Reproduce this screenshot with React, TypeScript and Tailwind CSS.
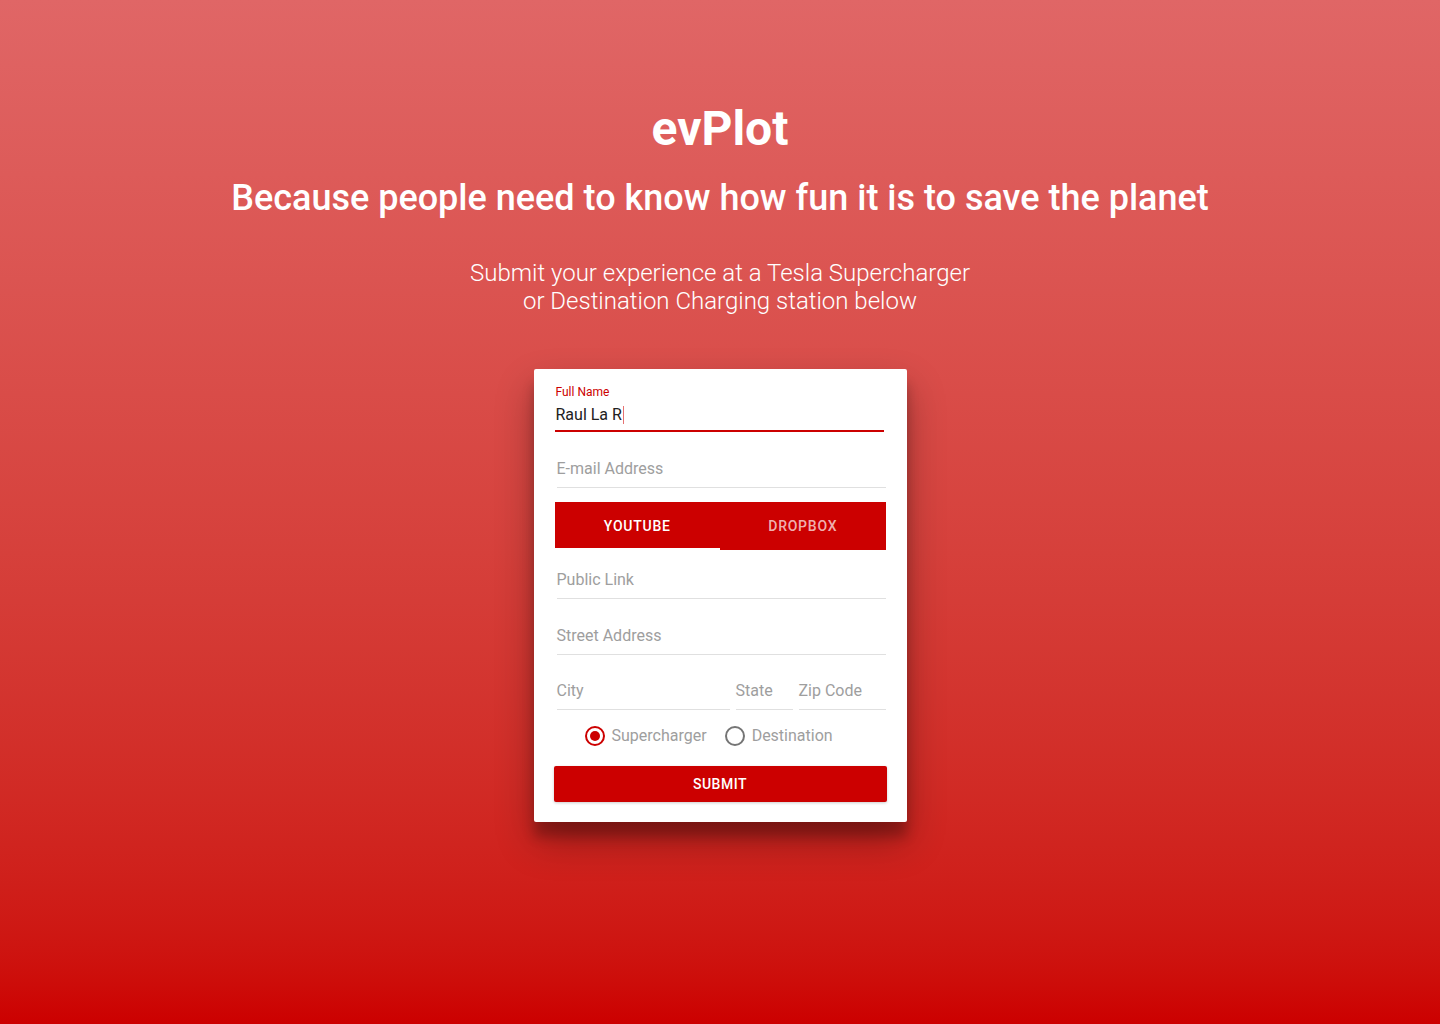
import { useState } from 'react'

const font = { fontFamily: 'Roboto, "Liberation Sans", sans-serif' }

function Field({ placeholder, h = 'h-[56px]' }: { placeholder: string; h?: string }) {
  return (
    <div className={`${h} ml-[2px] flex items-end border-b border-[#e0e0e0] pb-[6px]`}>
      <span className="text-[16px] leading-[24px] text-[#9e9e9e]">{placeholder}</span>
    </div>
  )
}

export default function App() {
  const [tab, setTab] = useState<'youtube' | 'dropbox'>('youtube')
  const [kind, setKind] = useState<'super' | 'dest'>('super')

  return (
    <div
      style={font}
      className="min-h-[1024px] w-full bg-gradient-to-b from-[#e06666] to-[#cc0000] flex flex-col items-center pt-[101px] text-white"
    >
      <h1 className="text-[48px] leading-[56px] font-bold">evPlot</h1>
      <h2 className="mt-[20px] text-[36px] leading-[42px] font-medium">
        Because people need to know how fun it is to save the planet
      </h2>
      <p className="mt-[40px] text-[24px] leading-[28px] font-light text-center">
        Submit your experience at a Tesla Supercharger
        <br />
        or Destination Charging station below
      </p>

      <div className="mt-[54px] w-[373px] bg-white px-[21px] pt-[16px] pb-[20px] rounded-[2px] shadow-[0_19px_38px_rgba(0,0,0,0.3),0_15px_12px_rgba(0,0,0,0.22)]">
        <div className="border-b-2 border-[#cc0000] pb-[3px] mr-[2px]">
          <div className="text-[12px] leading-[14px] text-[#cc0000] pl-[1px]">Full Name</div>
          <div className="mt-[4px] flex items-center text-[16px] leading-[24px] text-[#212121] pl-[1px]">
            Raul La R<span className="ml-[1px] inline-block w-[1px] h-[18px] bg-[#e57373]" />
          </div>
        </div>

        <Field placeholder="E-mail Address" />

        <div className="mt-[14px] h-[48px] bg-[#cc0000] flex relative">
          <button
            onClick={() => setTab('youtube')}
            className={`flex-1 text-[14px] font-medium tracking-[0.75px] ${tab === 'youtube' ? 'text-white' : 'text-white/70'}`}
          >
            YOUTUBE
          </button>
          <button
            onClick={() => setTab('dropbox')}
            className={`flex-1 text-[14px] font-medium tracking-[0.75px] ${tab === 'dropbox' ? 'text-white' : 'text-white/70'}`}
          >
            DROPBOX
          </button>
          <div
            className={`absolute bottom-0 h-[2px] w-1/2 bg-white ${tab === 'youtube' ? 'left-0' : 'left-1/2'}`}
          />
        </div>

        <Field placeholder="Public Link" h="h-[49px]" />
        <Field placeholder="Street Address" />

        <div className="flex gap-[4px]">
          <div className="flex-1">
            <Field placeholder="City" h="h-[55px]" />
          </div>
          <div className="w-[59px]">
            <Field placeholder="State" h="h-[55px]" />
          </div>
          <div className="w-[89px]">
            <Field placeholder="Zip Code" h="h-[55px]" />
          </div>
        </div>

        <div className="h-[52px] flex items-center pl-[30px] gap-[18px] text-[16px] text-[#9e9e9e]">
          <label className="flex items-center gap-[7px] cursor-pointer" onClick={() => setKind('super')}>
            <span
              className={`w-[20px] h-[20px] rounded-full border-2 flex items-center justify-center ${kind === 'super' ? 'border-[#cc0000]' : 'border-[#757575]'}`}
            >
              {kind === 'super' && <span className="w-[10px] h-[10px] rounded-full bg-[#cc0000]" />}
            </span>
            Supercharger
          </label>
          <label className="flex items-center gap-[7px] cursor-pointer" onClick={() => setKind('dest')}>
            <span
              className={`w-[20px] h-[20px] rounded-full border-2 flex items-center justify-center ${kind === 'dest' ? 'border-[#cc0000]' : 'border-[#757575]'}`}
            >
              {kind === 'dest' && <span className="w-[10px] h-[10px] rounded-full bg-[#cc0000]" />}
            </span>
            Destination
          </label>
        </div>

        <button className="mt-[4px] -mx-[1px] w-[333px] h-[36px] bg-[#cc0000] rounded-[2px] text-white text-[14px] font-medium tracking-[0.5px] shadow-[0_1px_3px_rgba(0,0,0,0.2)]">
          SUBMIT
        </button>
      </div>
    </div>
  )
}
